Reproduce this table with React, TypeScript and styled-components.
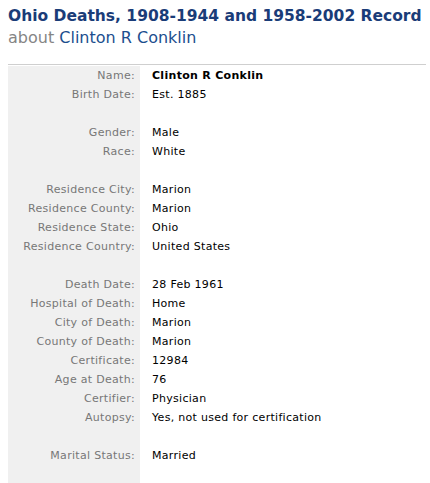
import React from "react";
import styled, {createGlobalStyle} from "styled-components";

interface Field {
    label: string,
    value: string,
    strong?: boolean
}

const groups: Field[][] = [
    [
        {label: "Name", value: "Clinton R Conklin", strong: true},
        {label: "Birth Date", value: "Est. 1885"}
    ],
    [
        {label: "Gender", value: "Male"},
        {label: "Race", value: "White"}
    ],
    [
        {label: "Residence City", value: "Marion"},
        {label: "Residence County", value: "Marion"},
        {label: "Residence State", value: "Ohio"},
        {label: "Residence Country", value: "United States"}
    ],
    [
        {label: "Death Date", value: "28 Feb 1961"},
        {label: "Hospital of Death", value: "Home"},
        {label: "City of Death", value: "Marion"},
        {label: "County of Death", value: "Marion"},
        {label: "Certificate", value: "12984"},
        {label: "Age at Death", value: "76"},
        {label: "Certifier", value: "Physician"},
        {label: "Autopsy", value: "Yes, not used for certification"}
    ],
    [
        {label: "Marital Status", value: "Married"}
    ]
];

export default function App() {
    return (
        <>
            <GlobalStyle/>
            <Page>
                <Title>Ohio Deaths, 1908-1944 and 1958-2002 Record</Title>
                <Subtitle><About>about</About> Clinton R Conklin</Subtitle>
                <Record>
                    {groups.map((group, gi) => (
                        <React.Fragment key={gi}>
                            {gi > 0 && <Row><Label/><Value/></Row>}
                            {group.map(item => (
                                <Row key={item.label}>
                                    <Label>{item.label}:</Label>
                                    <Value strong={item.strong}>{item.value}</Value>
                                </Row>
                            ))}
                        </React.Fragment>
                    ))}
                    <Row tall><Label/><Value/></Row>
                </Record>
            </Page>
        </>
    );
}

const GlobalStyle = createGlobalStyle`
    html, body {
        margin: 0;
        padding: 0;
        background: #fff;
    }
`;

const Page = styled.div`
    padding: 6px 4px 0 8px;
    height: 483px;
    overflow: hidden;
    font-family: "DejaVu Sans", Verdana, sans-serif;
`;

const Title = styled.h1`
    margin: 0;
    font-size: 15.5px;
    line-height: 20px;
    font-weight: bold;
    color: #1a3c78;
`;

const Subtitle = styled.h2`
    margin: 0 0 15px;
    font-size: 16px;
    line-height: 23px;
    font-weight: normal;
    color: #1c4e8e;
`;

const About = styled.span`
    color: #858585;
`;

const Record = styled.div`
    width: 418px;
    border-top: 1px solid #cfcfcf;
    padding-top: 1px;
`;

const Row = styled.div<{tall?: boolean}>`
    display: grid;
    grid-template-columns: 132px 1fr;
    height: ${props => props.tall ? 40 : 19}px;
    font-size: 11px;
    line-height: 19px;
    letter-spacing: 0.3px;
`;

const Label = styled.div`
    background: #f0f0f0;
    color: #777;
    text-align: right;
    padding-right: 5px;
    white-space: nowrap;
`;

const Value = styled.div<{strong?: boolean}>`
    padding-left: 12px;
    color: #000;
    font-weight: ${props => props.strong ? "bold" : "normal"};
`;
